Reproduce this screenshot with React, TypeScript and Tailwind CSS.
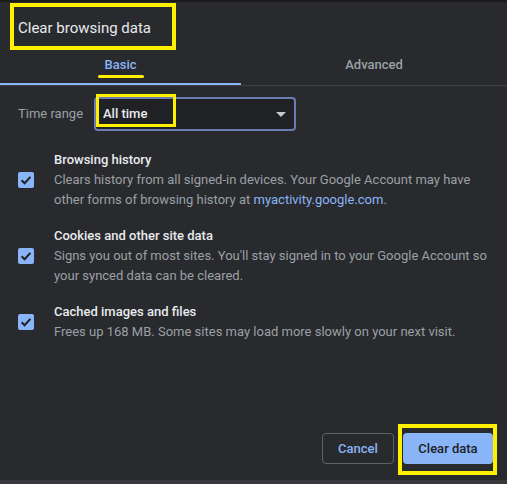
import React from "react";

const items = [
  {
    title: "Browsing history",
    desc: (
      <>
        Clears history from all signed-in devices. Your Google Account may have other forms of
        browsing history at <span className="text-[#8ab4f8]">myactivity.google.com</span>.
      </>
    ),
  },
  {
    title: "Cookies and other site data",
    desc: (
      <>
        Signs you out of most sites. You'll stay signed in to your Google Account so your synced
        data can be cleared.
      </>
    ),
  },
  {
    title: "Cached images and files",
    desc: <>Frees up 168 MB. Some sites may load more slowly on your next visit.</>,
  },
];

function Checkbox() {
  return (
    <div className="w-[16px] h-[16px] shrink-0 rounded-[2px] bg-[#8ab4f8] flex items-center justify-center">
      <svg width="16" height="16" viewBox="0 0 16 16" fill="none">
        <path d="M3.6 8.2 L6.6 11.2 L12.4 4.8" stroke="#202124" strokeWidth="2" />
      </svg>
    </div>
  );
}

export default function App() {
  return (
    <div className="w-[507px] h-[484px] bg-[#292a2d] border-t-2 border-b-4 border-t-[#1b1b1d] border-b-[#37383b] flex flex-col font-['Roboto',sans-serif] overflow-hidden">
      {/* header */}
      <div className="ml-[10px] mt-[1px] w-[166px] h-[47px] border-4 border-[#fff000] flex items-center pl-[4px] pt-[3px]">
        <h1 className="text-[15px] leading-[20px] text-[#e8eaed]">Clear browsing data</h1>
      </div>

      {/* tabs */}
      <div className="flex border-b border-[#3c4043]">
        <div className="w-[241px] h-[35px] flex flex-col items-center">
          <span className="pt-[7px] text-[13px] leading-[16px] font-medium text-[#8ab4f8]">Basic</span>
          <span className="mt-[2px] w-[46px] h-[3px] rounded-full bg-[#fff000]" />
          <span className="mt-auto w-full h-[2px] bg-[#8ab4f8]" />
        </div>
        <div className="flex-1 h-[35px] flex flex-col items-center">
          <span className="pt-[7px] text-[13px] leading-[16px] font-medium text-[#9aa0a6]">Advanced</span>
        </div>
      </div>

      {/* time range */}
      <div className="mt-[11px] pl-[18px] flex items-center">
        <span className="w-[76px] text-[13px] text-[#9aa0a6]">Time range</span>
        <div className="relative w-[202px] h-[34px] rounded-[4px] border-2 border-[#6b7bb3] bg-[#202124] flex items-center pl-[7px] pr-[8px]">
          <span className="text-[13px] font-medium text-[#e8eaed]">All time</span>
          <span className="absolute left-0 -top-[5px] w-[80px] h-[33px] border-[3px] border-[#fff000]" />
          <svg className="ml-auto" width="10" height="5" viewBox="0 0 10 5">
            <path d="M0 0 L10 0 L5 5 Z" fill="#c4c7cc" />
          </svg>
        </div>
      </div>

      {/* options */}
      <div className="mt-[19px] flex flex-col gap-[16px]">
        {items.map((item) => (
          <div key={item.title} className="flex items-center pl-[18px]">
            <Checkbox />
            <div className="ml-[20px] w-[440px] text-[13px] leading-[20px]">
              <div className="font-medium text-[#e8eaed]">{item.title}</div>
              <div className="text-[#9aa0a6]">{item.desc}</div>
            </div>
          </div>
        ))}
      </div>

      {/* actions */}
      <div className="mt-auto flex justify-end gap-[9px] pr-[14px] pb-[16px]">
        <button className="w-[72px] h-[31px] rounded-[4px] border border-[#5f6368] text-[13px] font-medium text-[#8ab4f8]">
          Cancel
        </button>
        <button className="relative w-[90px] h-[31px] rounded-[4px] bg-[#8ab4f8] text-[13px] font-medium text-[#202124]">
          Clear data
          <span className="absolute -left-[5px] -top-[9px] w-[99px] h-[51px] border-4 border-[#fff000]" />
        </button>
      </div>
    </div>
  );
}
